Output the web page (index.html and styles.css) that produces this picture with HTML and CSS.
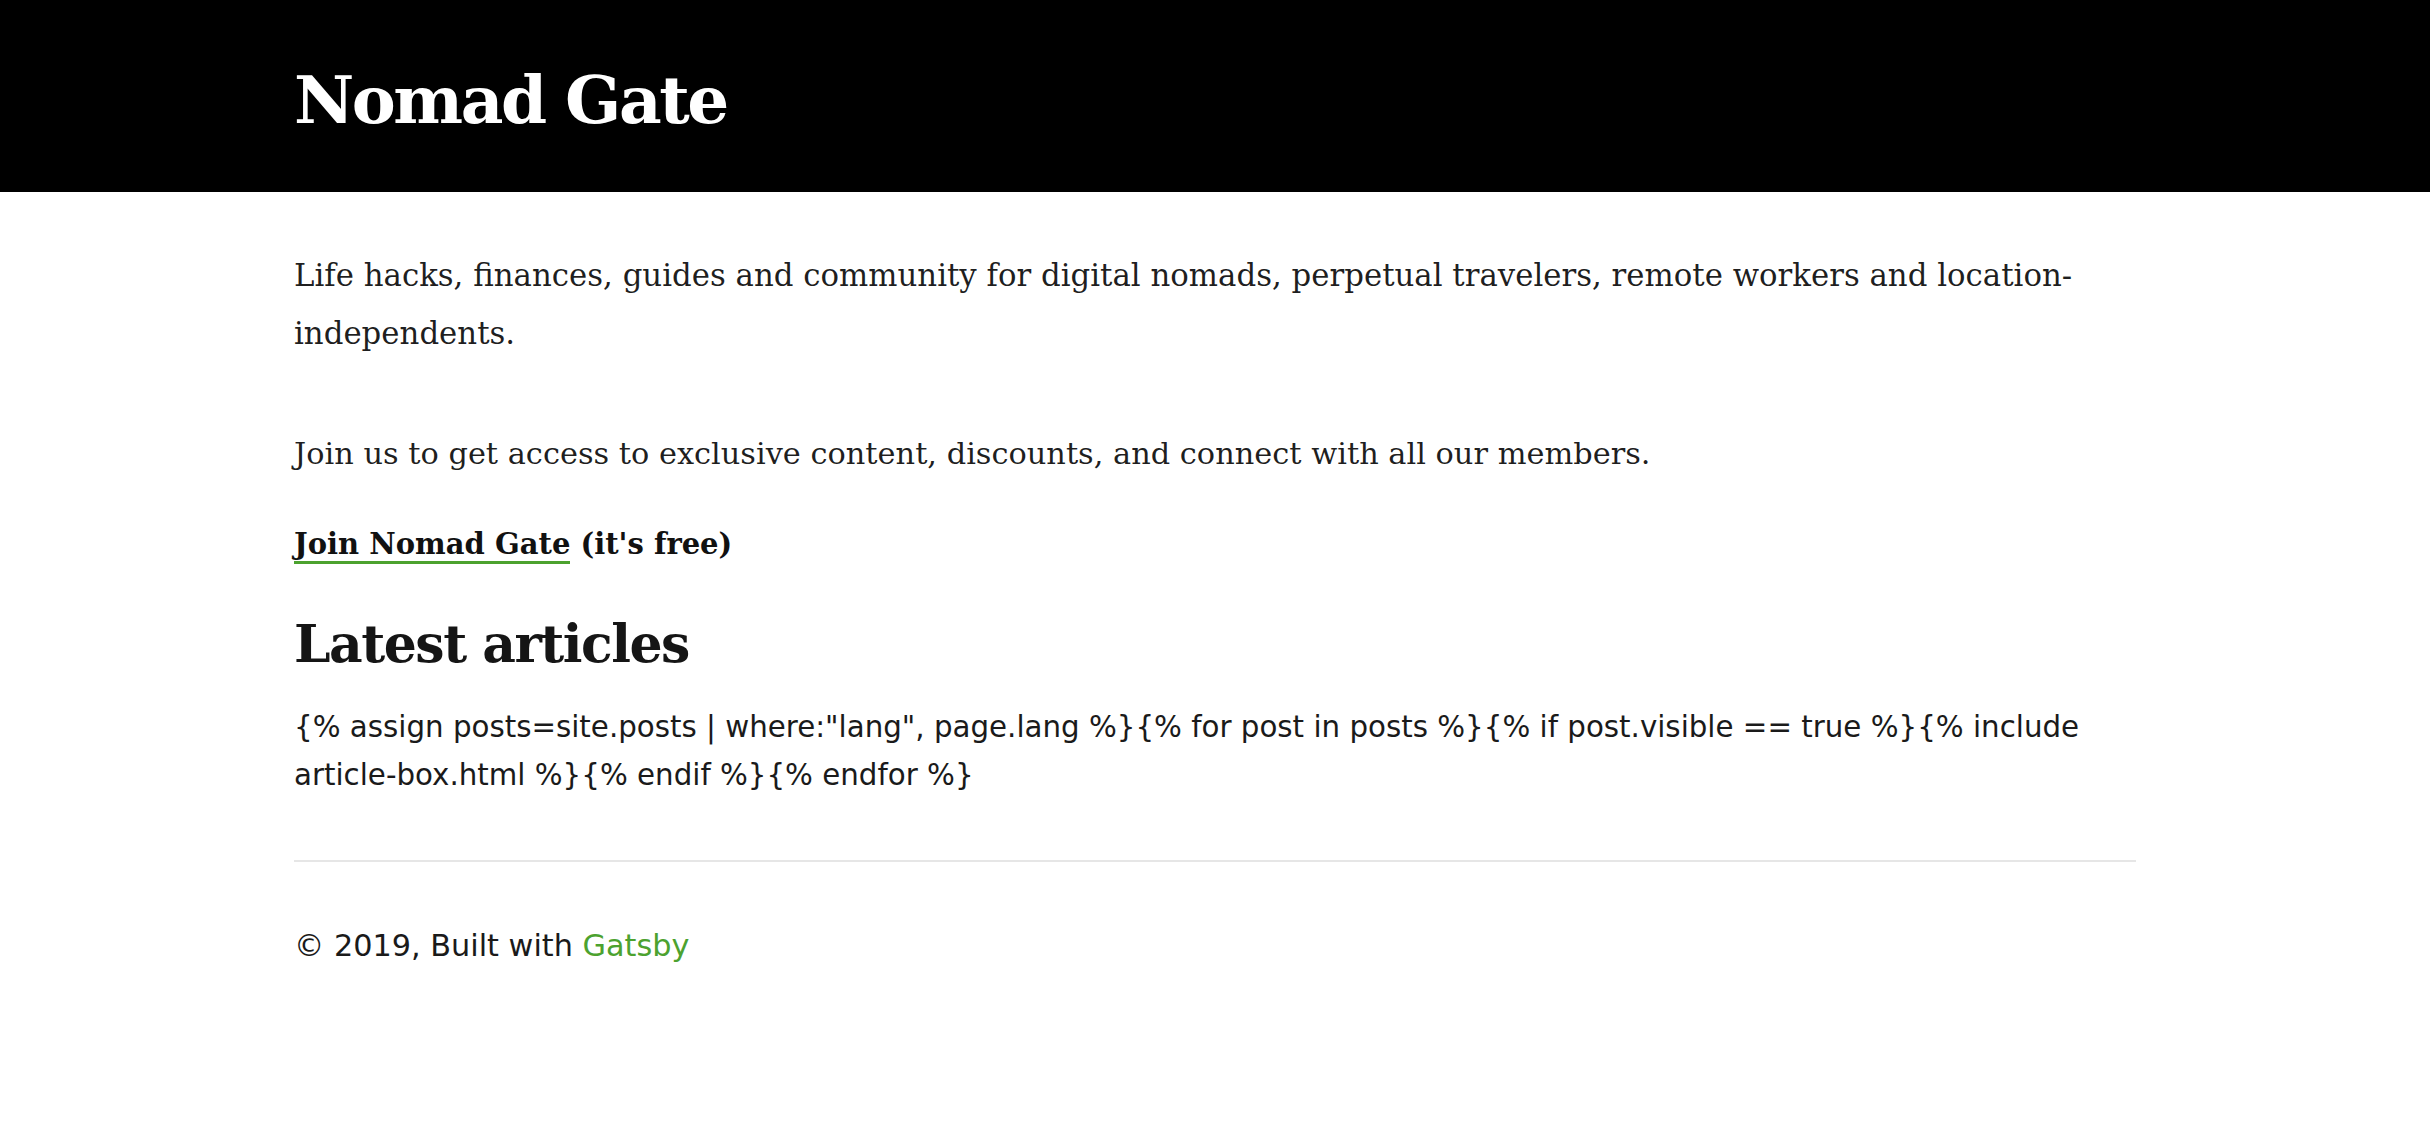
FILE: index.html
```html
<!DOCTYPE html>
<html lang="en">
<head>
<meta charset="utf-8">
<title>Nomad Gate</title>
<link rel="stylesheet" href="styles.css">
</head>
<body>
<header class="site-header">
  <div class="container">
    <h1 class="site-title">Nomad Gate</h1>
  </div>
</header>
<main class="container content">
  <p class="intro">Life hacks, finances, guides and community for digital nomads, perpetual travelers, remote workers and location-independents.</p>
  <p class="join-text">Join us to get access to exclusive content, discounts, and connect with all our members.</p>
  <p class="join-cta"><a class="join-link" href="#">Join Nomad Gate</a> (it's free)</p>
  <h2 class="section-title">Latest articles</h2>
  <p class="liquid">{% assign posts=site.posts | where:"lang", page.lang %}{% for post in posts %}{% if post.visible == true %}{% include article-box.html %}{% endif %}{% endfor %}</p>
  <hr class="divider">
  <footer class="site-footer">© 2019, Built with <a class="gatsby-link" href="#">Gatsby</a></footer>
</main>
</body>
</html>
```
FILE: styles.css
```css
html, body {
  margin: 0;
  padding: 0;
  background: #ffffff;
}

body {
  font-family: "DejaVu Serif", "Liberation Serif", serif;
  color: hsla(0, 0%, 0%, 0.88);
}

.container {
  max-width: 1842px;
  margin: 0 auto;
}

.site-header {
  background: #000000;
  padding: 67px 0 59px;
}

.site-title {
  margin: 0;
  font-family: "DejaVu Serif", serif;
  font-weight: 700;
  font-size: 66px;
  line-height: 66px;
  letter-spacing: -2.5px;
  color: #ffffff;
}

.content {
  padding-top: 54px;
}

.intro,
.join-text,
.join-cta {
  font-size: 30.8px;
  line-height: 58px;
  margin: 0;
}

.intro {
  margin-bottom: 63px;
}

.join-text {
  font-size: 30.4px;
  margin-bottom: 32px;
}

.join-cta {
  font-size: 29px;
  font-weight: 700;
  color: #111;
}

.join-link {
  color: #111;
  text-decoration: none;
  border-bottom: 3px solid #4ca22f;
}

.section-title {
  margin: 37px 0 25px;
  font-family: "DejaVu Serif", serif;
  font-weight: 700;
  font-size: 52px;
  line-height: 68px;
  letter-spacing: -1.5px;
  color: #151515;
}

.liquid,
.site-footer {
  font-family: "DejaVu Sans", "Liberation Sans", sans-serif;
  font-size: 29.3px;
  line-height: 48px;
  margin: 0;
  color: #1a1a1a;
}

.site-footer {
  font-size: 30.3px;
}

.divider {
  border: 0;
  height: 2px;
  background: #e6e6e6;
  margin: 61px 0 60px;
}

.gatsby-link {
  color: #4ca22f;
  text-decoration: none;
}
```
